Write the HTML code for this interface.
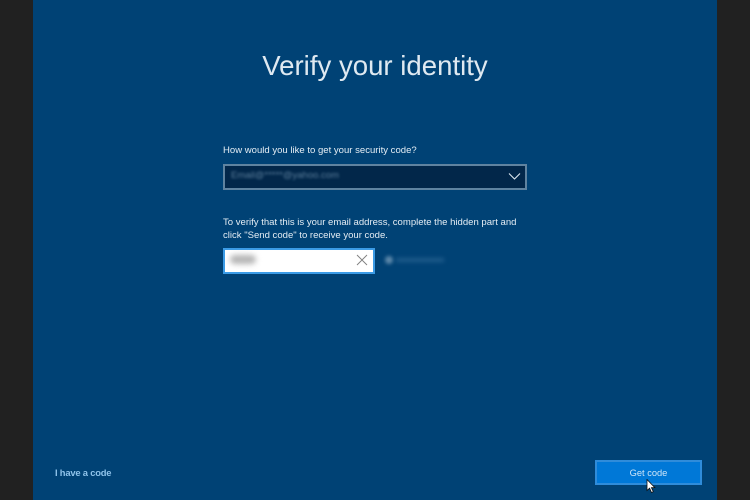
<!DOCTYPE html>
<html><head><meta charset="utf-8">
<style>
html,body{margin:0;padding:0;width:750px;height:500px;overflow:hidden;background:#212121}
body{position:relative;font-family:"Liberation Sans",sans-serif}
.a{position:absolute;white-space:nowrap}
#main{left:33px;top:0;width:684px;height:500px;background:#004275}
.t{color:#e4edf4;font-size:9.55px;line-height:13px;filter:blur(.25px)}
</style></head><body>
<div class="a" id="main"></div>
<div class="a" style="left:252px;top:48px;width:246px;font-size:27.6px;line-height:36px;color:#dfe9f1;text-align:center;font-weight:normal;filter:blur(.25px)">Verify your identity</div>
<div class="a t" style="left:223px;top:144px">How would you like to get your security code?</div>
<div class="a" style="left:223px;top:164px;width:300px;height:22px;background:#02274a;border:2px solid #5f83a0"></div>
<div class="a" style="left:231px;top:170px;font-size:9.5px;line-height:12px;color:#5b7f9c;filter:blur(1.3px)">Email@*****@yahoo.com</div>
<svg class="a" style="left:508px;top:172px" width="13" height="9" viewBox="0 0 13 9"><path d="M1 1.5L6.5 7L12 1.5" fill="none" stroke="#dfe9f1" stroke-width="1.1"/></svg>
<div class="a t" style="left:223px;top:216px">To verify that this is your email address, complete the hidden part and</div>
<div class="a t" style="left:223px;top:229px">click "Send code" to receive your code.</div>
<div class="a" style="left:223px;top:248px;width:148px;height:22px;background:#fff;border:2px solid #3b9be6"></div>
<div class="a" style="left:230px;top:255px;width:26px;height:9px;background:#b4b4b4;border-radius:5px;filter:blur(3px)"></div>
<svg class="a" style="left:356px;top:254px" width="12" height="12" viewBox="0 0 12 12"><path d="M1 1L11 11M11 1L1 11" fill="none" stroke="#808080" stroke-width=".9"/></svg>
<div class="a" style="left:385px;top:256px;width:8px;height:8px;background:#5c88aa;border-radius:4px;filter:blur(1.8px)"></div>
<div class="a" style="left:396px;top:258px;width:48px;height:4px;background:#1f5c8c;filter:blur(2px)"></div>
<div class="a" style="left:55px;top:466px;font-size:9.4px;line-height:14px;color:#8fc3ea;font-weight:bold;letter-spacing:-.2px;filter:blur(.25px)">I have a code</div>
<div class="a" style="left:595px;top:460px;width:103px;height:21px;background:#0078d7;border:2px solid #2f8cda"></div>
<div class="a" style="left:595px;top:466px;width:107px;text-align:center;font-size:9.3px;line-height:14px;color:#cfe6f8;filter:blur(.25px)">Get code</div>
<svg class="a" style="left:646px;top:479px" width="10" height="15" viewBox="0 0 10 15"><path d="M1 .5V11.5L3.6 9.2L5.5 13.5L7.3 12.7L5.4 8.6H8.8Z" fill="#fff" stroke="#111" stroke-width=".8"/></svg>
</body></html>
